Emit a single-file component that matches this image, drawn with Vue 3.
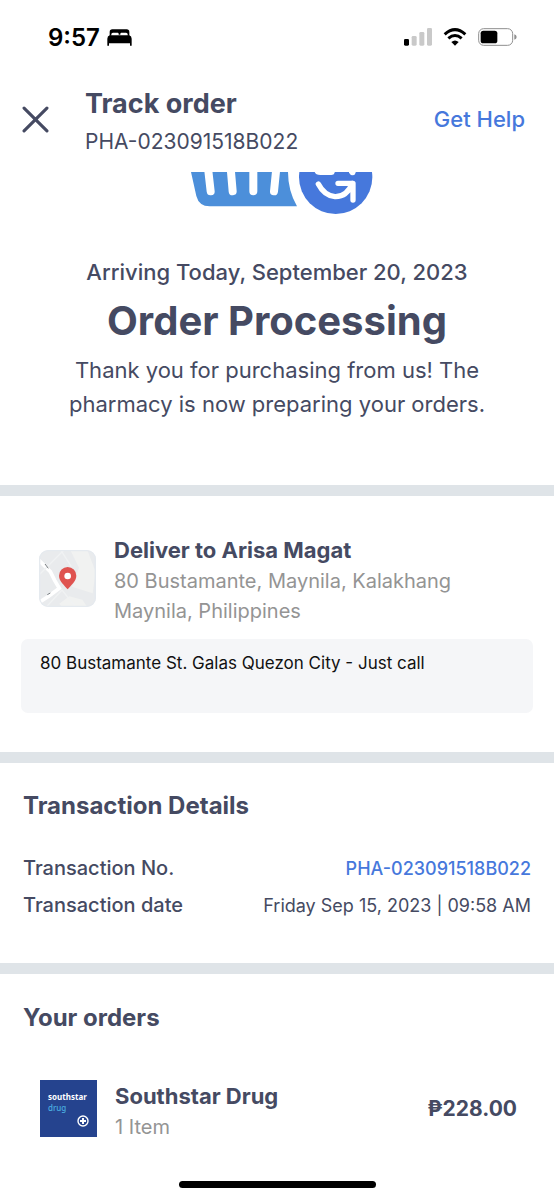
<script setup>
const transactionNo = 'PHA-023091518B022'
</script>

<template>
  <div class="screen">
    <div class="status">
      <div class="status-left">
        <span class="time">9:57</span>
        <svg class="bed" viewBox="0 0 75 51" aria-hidden="true">
          <path d="M8 20V9Q8 1 16 1H59Q67 1 67 9V20H62V16Q62 11 57 11H43Q40 11 40 15V17H35V15Q35 11 32 11H18Q13 11 13 16V20Z" />
          <path d="M8 19H67Q74 21 74 29V50H69V43H6V50H1V29Q1 21 8 19Z" />
        </svg>
      </div>
      <div class="status-right">
        <svg class="signal" viewBox="0 0 84 54" aria-hidden="true">
          <rect x="0" y="33" width="15" height="20" rx="4" />
          <g fill="#c9c9c9">
            <rect x="23" y="24" width="15" height="29" rx="4" />
            <rect x="46" y="12" width="15" height="41" rx="4" />
            <rect x="69" y="0" width="15" height="53" rx="4" />
          </g>
        </svg>
        <svg class="wifi" viewBox="0 0 72 54" aria-hidden="true">
          <path d="M5 19Q36 -9 67 19M16 31Q36 14 56 31" fill="none" stroke="#000" stroke-width="9" />
          <path d="M36 53L25 42Q36 33 47 42Z" />
        </svg>
        <svg class="battery" viewBox="0 0 117 54" aria-hidden="true">
          <rect x="2" y="2" width="102" height="50" rx="15" fill="none" stroke="#8f8f8f" stroke-width="3" />
          <rect x="8" y="8" width="50" height="38" rx="8" />
          <path d="M109 19Q116 21 116 27Q116 33 109 35Z" fill="#8f8f8f" />
        </svg>
      </div>
    </div>

    <header class="header">
      <button class="close" type="button" aria-label="Close">
        <svg viewBox="0 0 26 26" aria-hidden="true">
          <path d="M2 2L24 24M24 2L2 24" fill="none" stroke="#454a62" stroke-width="3" stroke-linecap="round" />
        </svg>
      </button>
      <div class="heading">
        <h1>Track order</h1>
        <p>{{ transactionNo }}</p>
      </div>
      <a class="help" href="#help">Get Help</a>
    </header>

    <main>
      <section class="hero">
        <svg class="logo" viewBox="34 36 576 126" aria-hidden="true">
          <path d="M64 36H355Q355 92 382 139H120Q88 139 80 108Z" fill="#4c8fda" />
          <path d="M115 24L123 94M183 24L189 94M251 24V94M320 24L313 94" fill="none" stroke="#fff" stroke-width="24" stroke-linecap="round" />
          <circle cx="498" cy="52" r="110" fill="#4678dc" />
          <path d="M435 30H495V38Q493 45 485 45H452Q438 45 435 36ZM538 30H558V38Q556 46 548 46Q543 46 538 38Z" fill="#fff" />
          <path d="M446 72Q464 107 496 110Q532 111 548 70M505 70H550V120" fill="none" stroke="#fff" stroke-width="16" stroke-linecap="round" stroke-linejoin="round" />
        </svg>
        <p class="arriving">Arriving Today, September 20, 2023</p>
        <h2>Order Processing</h2>
        <p class="thanks">Thank you for purchasing from us! The pharmacy is now preparing your orders.</p>
      </section>

      <section class="delivery">
        <div class="recipient">
          <svg class="map" viewBox="0 0 171 171" aria-hidden="true">
            <defs><clipPath id="map-clip"><rect width="171" height="171" rx="27" /></clipPath></defs>
            <g clip-path="url(#map-clip)">
              <rect width="171" height="171" fill="#e9ebed" />
              <path d="M94 0H145L170 66L161 130L99 110L120 53ZM61 161L91 139L130 149L145 171H69Z" fill="#f1f2f1" />
              <path d="M0 31L34 65L47 91L61 115L29 139L0 157" fill="none" stroke="#fff" stroke-width="11" />
              <path d="M0 75L75 0M22 171L69 120L110 171M65 0L97 50" fill="none" stroke="#f0f2f3" stroke-width="4" />
              <path d="M18 42L28 55M25 134L34 129" stroke="#777c80" stroke-width="3" />
              <rect x="2" y="2" width="167" height="167" rx="25" fill="none" stroke="#e5eaef" stroke-width="4" />
            </g>
            <path d="M86 118C77 106 60 94 60 77A26 26 0 0 1 112 77C112 94 95 106 86 118Z" fill="#df5350" />
            <circle cx="86" cy="78" r="10" fill="#fff" />
          </svg>
          <div>
            <h3>Deliver to Arisa Magat</h3>
            <p class="address">80 Bustamante, Maynila, Kalakhang Maynila, Philippines</p>
          </div>
        </div>
        <p class="note">80 Bustamante St. Galas Quezon City - Just call</p>
      </section>

      <section class="details">
        <h2>Transaction Details</h2>
        <dl>
          <div>
            <dt>Transaction No.</dt>
            <dd><a href="#transaction">{{ transactionNo }}</a></dd>
          </div>
          <div>
            <dt>Transaction date</dt>
            <dd>Friday Sep 15, 2023 | 09:58 AM</dd>
          </div>
        </dl>
      </section>

      <section class="orders">
        <h2>Your orders</h2>
        <div class="order">
          <div class="store">
            <span>southstar</span>
            <span class="drug">drug</span>
            <svg viewBox="0 0 12 12" aria-hidden="true">
              <circle cx="6" cy="6" r="5" fill="none" stroke="#fff" stroke-width="1.400" />
              <path d="M6 3V9M3 6H9" stroke="#fff" stroke-width="2" />
            </svg>
          </div>
          <div class="order-info">
            <h3>Southstar Drug</h3>
            <p>1 Item</p>
          </div>
          <strong>₱228.00</strong>
        </div>
      </section>
    </main>
    <div class="home-bar"></div>
  </div>
</template>

<style>
body {
  margin: 0;
  background: #fff;
}
</style>

<style scoped>
.screen {
  display: flex;
  flex-direction: column;
  min-height: 100vh;
  box-sizing: border-box;
  color: #454a62;
  font-family: Inter, "Liberation Sans", sans-serif;
  font-size: 20px;
}
h1, h2, h3, p, dl, dd {
  margin: 0;
}
h1, h2, h3, strong {
  font-weight: 700;
}
a {
  color: #4678dc;
  text-decoration: none;
  font-weight: 500;
}
svg {
  display: block;
  flex: none;
}
.status {
  display: flex;
  justify-content: space-between;
  align-items: center;
  height: 74px;
  padding: 0 37px 0 48px;
  color: #000;
}
.status-left, .status-right {
  display: flex;
  align-items: center;
}
.status-left {
  gap: 7px;
}
.time {
  font-size: 24px;
  font-weight: 600;
}
.bed {
  width: 25px;
  height: 17px;
}
.status-right {
  gap: 11px;
}
.signal {
  width: 28px;
  height: 18px;
}
.wifi {
  width: 24px;
  height: 18px;
}
.battery {
  width: 39px;
  height: 18px;
}
.header {
  display: flex;
  align-items: center;
  box-sizing: border-box;
  height: 98px;
  padding: 0 29px 8px 22px;
}
.close {
  padding: 0;
  border: 0;
  background: none;
}
.close svg {
  width: 27px;
  height: 27px;
}
.heading {
  flex: 1;
  padding: 8px 0 0 36px;
}
h1 {
  font-size: 27px;
  line-height: 38px;
}
.heading p {
  font-size: 21px;
  line-height: 38px;
}
.help {
  font-size: 22px;
}
.hero {
  display: flex;
  flex-direction: column;
  align-items: center;
  padding: 0 40px 64px;
  text-align: center;
}
.logo {
  width: 192px;
  height: 42px;
}
.arriving {
  margin-top: 42px;
  font-size: 22px;
  line-height: 32px;
  font-weight: 500;
}
.hero h2 {
  margin-top: 8px;
  font-size: 40px;
  line-height: 50px;
}
.thanks {
  max-width: 430px;
  margin-top: 7px;
  font-size: 22px;
  line-height: 34px;
}
.delivery, .details, .orders {
  border-top: 11px solid #dfe4e8;
}
.delivery {
  padding: 38px 21px 39px;
}
.recipient {
  display: flex;
  align-items: flex-start;
  gap: 18px;
  padding: 0 60px 0 18px;
}
.map {
  width: 57px;
  height: 57px;
  margin-top: 16px;
}
h3 {
  font-size: 22px;
  line-height: 32px;
}
.address {
  color: #949494;
  line-height: 30px;
}
.note {
  box-sizing: border-box;
  min-height: 74px;
  margin-top: 13px;
  padding: 12px 19px;
  border-radius: 7px;
  background: #f5f6f8;
  color: #111;
  font-size: 17px;
  line-height: 24px;
}
.details {
  padding: 27px 23px 39px;
}
.details h2, .orders h2 {
  font-size: 24px;
  line-height: 32px;
}
dl {
  margin-top: 28px;
}
dl div {
  display: flex;
  justify-content: space-between;
  line-height: 37px;
}
dt {
  font-weight: 500;
}
dd {
  font-size: 18px;
}
.orders {
  padding: 28px 23px 24px;
}
.order {
  display: flex;
  align-items: center;
  gap: 18px;
  margin-top: 40px;
  padding: 0 14px 0 17px;
}
.store {
  display: grid;
  align-content: start;
  box-sizing: border-box;
  flex: none;
  width: 57px;
  height: 57px;
  padding: 11px 8px 9px;
  background: #25438e;
  color: #fff;
  font: 700 8px/11px "Noto Sans", sans-serif;
}
.drug {
  color: #4aaee0;
  font-weight: 500;
}
.store svg {
  width: 12px;
  height: 12px;
  margin-top: 2px;
  justify-self: end;
}
.order-info {
  flex: 1;
  padding-top: 6px;
}
.order-info p {
  color: #949494;
  line-height: 30px;
}
strong {
  font-size: 21px;
}
.home-bar {
  flex: none;
  width: 197px;
  height: 7px;
  margin: auto auto 12px;
  border-radius: 4px;
  background: #000;
}
</style>
